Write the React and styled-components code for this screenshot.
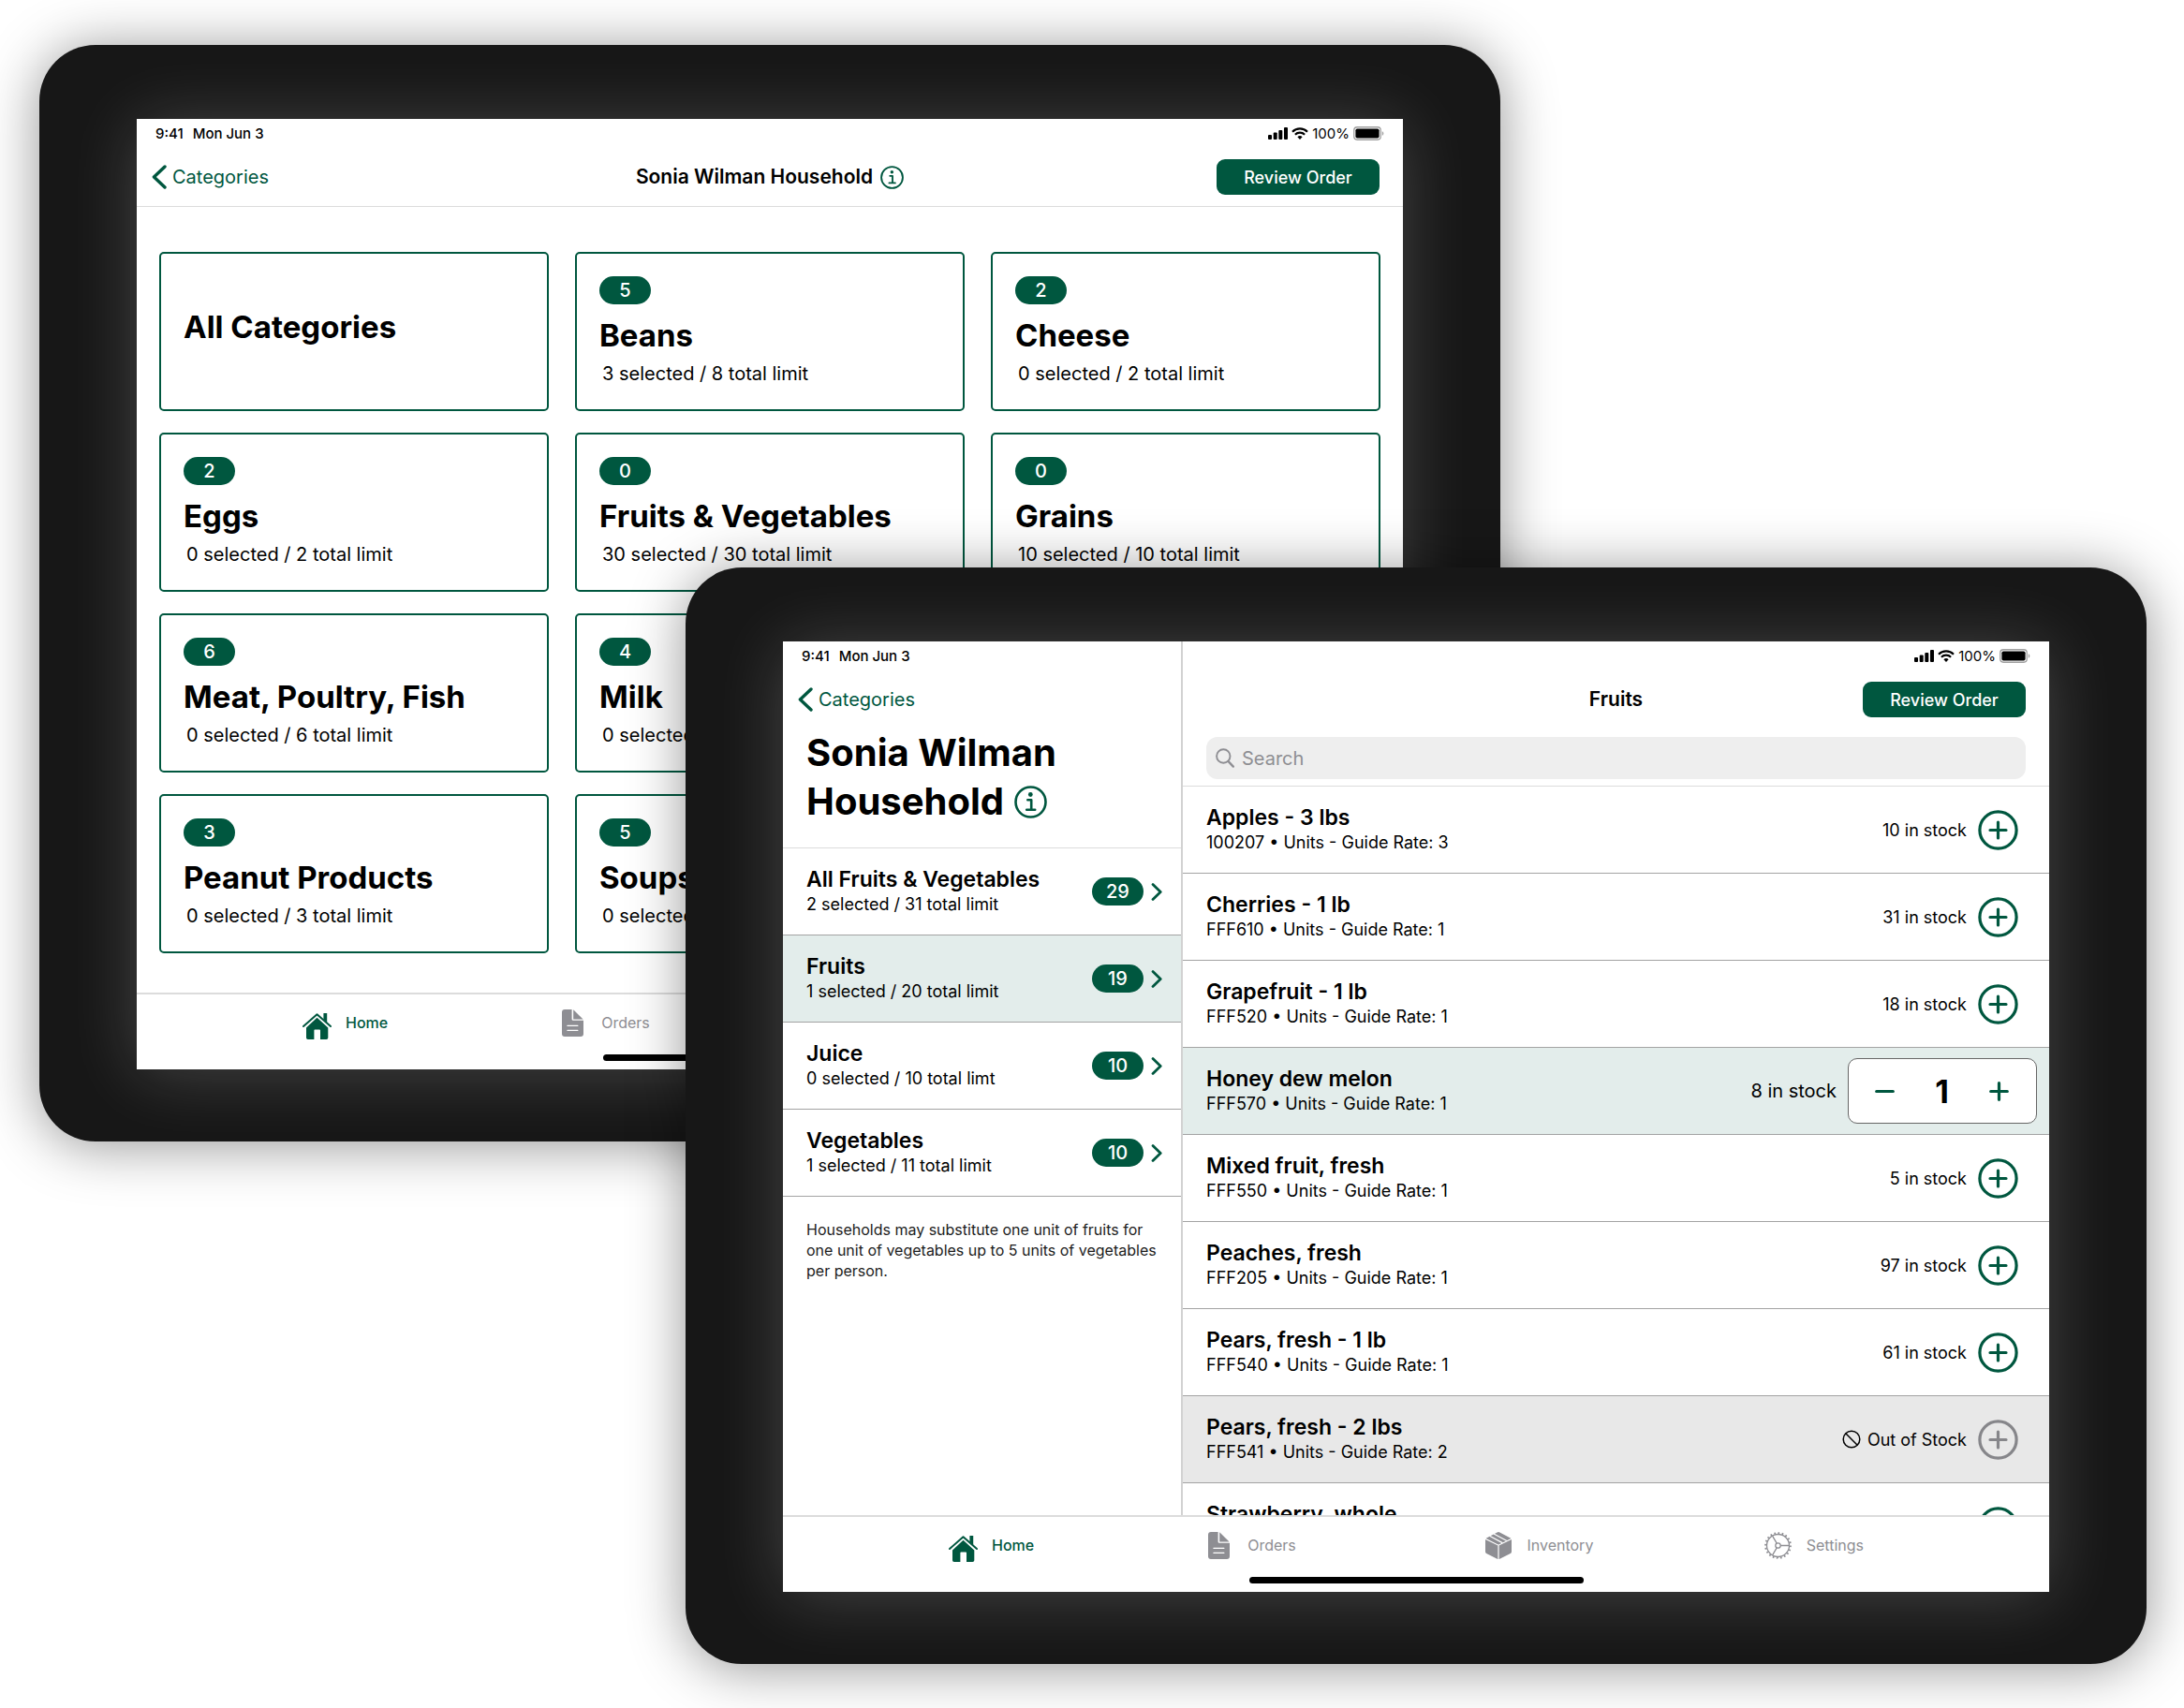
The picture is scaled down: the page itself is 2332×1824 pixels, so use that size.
import React from 'react';
import styled, { createGlobalStyle, css } from 'styled-components';

const green = '#00573f';
const gray = '#8e8e93';

const GlobalStyle = createGlobalStyle`
  *, *::before, *::after { box-sizing: border-box; }
  body {
    margin: 0;
    background: #fff;
    color: #000;
    font-family: Inter, Roboto, "Liberation Sans", sans-serif;
  }
  h1, h2, h3, p, ul { margin: 0; padding: 0; }
  ul { list-style: none; }
  a { color: inherit; text-decoration: none; }
  button { border: 0; padding: 0; background: none; font: inherit; color: inherit; cursor: pointer; }
  svg { display: block; flex: none; }
`;

/* ---------- devices ---------- */

const Stage = styled.main`
  display: grid;
  grid-template-columns: minmax(0, 690fr) minmax(0, 870fr) minmax(0, 690fr);
  align-items: start;
  padding: 48px 40px 47px 42px;
  overflow: hidden;
`;

const Device = styled.section`
  grid-row: 1;
  grid-column: ${p => (p.$front ? '2 / 4' : '1 / 3')};
  margin-top: ${p => (p.$front ? '558px' : '0')};
  padding: 79px 104px 77px;
  border-radius: 60px;
  background: #171717;
  box-shadow: 0 4px 60px rgba(0, 0, 0, 0.42);
`;

const Screen = styled.div`
  display: flex;
  flex-direction: column;
  aspect-ratio: 1352 / 1015;
  background: #fff;
  box-shadow: 0 4px 70px rgba(255, 255, 255, 0.2);
`;

/* ---------- status and navigation bars ---------- */

const StatusBar = styled.div`
  display: flex;
  align-items: center;
  height: 30px;
  padding: 0 20px;
  font-size: 15px;
  font-weight: 500;
`;

const Clock = styled.div`
  display: flex;
  gap: 10px;
`;

const Indicators = styled.div`
  display: flex;
  align-items: center;
  gap: 4px;
  margin-left: auto;
  font-weight: 400;
`;

const NavBar = styled.header`
  display: grid;
  grid-template-columns: 1fr auto 1fr;
  align-items: center;
  padding: 13px 25px ${p => (p.$lined ? '12px' : '8px')};
  border-bottom: ${p => (p.$lined ? '1px solid #dcdcdc' : '0')};
`;

const BackLink = styled.a`
  display: flex;
  align-items: center;
  gap: 6px;
  height: 38px;
  margin-left: -9px;
  color: ${green};
  font-size: 20px;
`;

const NavTitle = styled.h2`
  display: flex;
  align-items: center;
  gap: 8px;
  grid-column: 2;
  font-size: 21px;
  font-weight: 600;
  line-height: 38px;
`;

const ReviewButton = styled.button`
  grid-column: 3;
  justify-self: end;
  width: 174px;
  height: 38px;
  border-radius: 9px;
  background: ${green};
  color: #fff;
  font-size: 18px;
  font-weight: 500;
`;

const InfoButton = styled.button`
  color: ${green};
`;

/* ---------- category cards ---------- */

const Content = styled.div`
  flex: 1;
  min-height: 0;
`;

const CardGrid = styled.ul`
  display: grid;
  grid-template-columns: repeat(3, minmax(0, 1fr));
  grid-auto-rows: 170px;
  gap: 23px 28px;
  padding: 48px 24px 0;
`;

const CardItem = styled.li`
  display: flex;
  ${p => p.$newRow && css`grid-column-start: 1;`}
`;

const Card = styled.a`
  display: flex;
  flex: 1;
  flex-direction: column;
  align-items: flex-start;
  min-width: 0;
  padding: ${p => (p.$plain ? '57px 24px 0' : '24px 24px 0')};
  border: 2px solid ${green};
  border-radius: 5px;
`;

const CardTitle = styled.h3`
  margin-top: ${p => (p.$plain ? '0' : '12px')};
  font-size: 33px;
  font-weight: 700;
  line-height: 42px;
`;

const CardMeta = styled.p`
  padding-left: 3px;
  font-size: 20px;
  line-height: 40px;
`;

const Badge = styled.span`
  display: grid;
  place-items: center;
  width: 55px;
  height: 30px;
  border-radius: 15px;
  background: ${green};
  color: #fff;
  font-size: 20px;
  font-weight: 500;
  line-height: 30px;
`;

/* ---------- tab bar ---------- */

const TabBar = styled.nav`
  display: flex;
  flex-direction: column;
  align-items: center;
  justify-content: space-between;
  height: 82px;
  padding-bottom: 9px;
  border-top: 2px solid #dcdcdc;
`;

const Tabs = styled.ul`
  display: grid;
  grid-template-columns: minmax(0, 277fr) minmax(0, 296fr) minmax(0, 297fr) auto;
  width: 100%;
  padding: 12px 198px 0 177px;
`;

const TabLink = styled.a`
  display: flex;
  align-items: center;
  gap: ${p => p.$gap};
  height: 36px;
  color: ${p => (p.$active ? green : gray)};
  font-size: 16px;
  font-weight: ${p => (p.$active ? 500 : 400)};
`;

const HomeIndicator = styled.div`
  width: 357px;
  height: 7px;
  border-radius: 4px;
  background: #000;
`;

/* ---------- split view ---------- */

const Split = styled.div`
  display: grid;
  grid-template-columns: minmax(0, 427fr) minmax(0, 925fr);
  flex: 1;
  min-height: 0;
  overflow: hidden;
`;

const Sidebar = styled.aside`
  border-right: 2px solid #d2d2d2;
`;

const Household = styled.h1`
  padding: 4px 24px 23px 25px;
  border-bottom: 1px solid #dcdcdc;
  font-size: 40px;
  font-weight: 700;
  line-height: 52px;
`;

const HouseholdLine = styled.span`
  display: flex;
  align-items: center;
  gap: 11px;
`;

const rowBox = css`
  display: flex;
  align-items: center;
  height: 93px;
  border-bottom: 1px solid #a3a3a3;
`;

const GroupLink = styled.a`
  ${rowBox}
  gap: 8px;
  padding: 0 20px 0 25px;
  background: ${p => (p.$active ? '#e3edeb' : 'transparent')};
`;

const RowText = styled.div`
  flex: 1;
  min-width: 0;
  padding-bottom: 2px;
  white-space: nowrap;
`;

const RowTitle = styled.h3`
  font-size: 23px;
  font-weight: 600;
  line-height: 28px;
`;

const RowMeta = styled.p`
  font-size: 18px;
  line-height: 25px;
`;

const Note = styled.p`
  padding: 24px 20px 0 25px;
  color: #1c1c1c;
  font-size: 16px;
  line-height: 22px;
`;

const Products = styled.section`
  min-width: 0;
`;

const SearchArea = styled.div`
  padding: 13px 25px 7px;
  border-bottom: 1px solid #dcdcdc;
`;

const SearchBox = styled.label`
  display: flex;
  align-items: center;
  gap: 8px;
  height: 45px;
  padding: 0 10px;
  border-radius: 12px;
  background: #eee;
  color: ${gray};
`;

const SearchInput = styled.input`
  flex: 1;
  min-width: 0;
  border: 0;
  padding: 0;
  outline: 0;
  background: none;
  color: #000;
  font: 400 20px/30px Inter, Roboto, "Liberation Sans", sans-serif;
  &::placeholder { color: ${gray}; opacity: 1; }
`;

const ProductRow = styled.li`
  ${rowBox}
  gap: 12px;
  padding: 0 ${p => (p.$selected ? '13px' : '33px')} 0 25px;
  background: ${p => (p.$selected ? '#e3edeb' : p.$out ? '#e8e8e8' : 'transparent')};
`;

const Stock = styled.span`
  display: flex;
  align-items: center;
  gap: 7px;
  font-size: ${p => (p.$large ? '20px' : '18px')};
`;

const AddButton = styled.button`
  color: ${green};
  &:disabled { color: #86868a; }
`;

const Stepper = styled.div`
  display: flex;
  align-items: center;
  justify-content: space-between;
  width: 202px;
  height: 70px;
  padding: 0 29px 0 28px;
  border: 1px solid #666;
  border-radius: 10px;
  background: #fff;
  color: ${green};
`;

const Quantity = styled.output`
  color: #000;
  font-size: 34px;
  font-weight: 700;
`;

/* ---------- icons ---------- */

const SignalIcon = () => (
  <svg width="21" height="13" viewBox="0 0 21 13" fill="currentColor" aria-hidden="true">
    <rect x="0" y="8" width="4" height="5" rx="1" />
    <rect x="5.7" y="5.6" width="4" height="7.4" rx="1" />
    <rect x="11.3" y="3" width="4" height="10" rx="1" />
    <rect x="17" y="0" width="4" height="13" rx="1" />
  </svg>
);

const WifiIcon = () => (
  <svg width="18" height="13" viewBox="0 0 18 13" fill="none" stroke="currentColor" strokeWidth="2.2" aria-hidden="true">
    <path d="M1 4.7a11.3 11.3 0 0 1 16 0" />
    <path d="M3.9 7.8a7.2 7.2 0 0 1 10.2 0" />
    <path d="M9 12.9 6.4 10.2a3.7 3.7 0 0 1 5.2 0z" fill="currentColor" stroke="none" />
  </svg>
);

const BatteryIcon = () => (
  <svg width="33" height="15" viewBox="0 0 33 15" aria-hidden="true">
    <rect x="0.75" y="0.75" width="28.5" height="13.5" rx="3.4" fill="none" stroke="#a0a0a0" strokeWidth="1.3" />
    <rect x="2.4" y="2.4" width="25.2" height="10.2" rx="1.8" fill="#000" />
    <path d="M30.8 5.2c2 .6 2 4 0 4.6z" fill="#a0a0a0" />
  </svg>
);

const BackIcon = () => (
  <svg width="16" height="26" viewBox="0 0 16 26" fill="none" stroke="currentColor" strokeWidth="3.4" strokeLinecap="round" strokeLinejoin="round" aria-hidden="true">
    <path d="M14 2 2.4 13 14 24" />
  </svg>
);

const ForwardIcon = () => (
  <svg width="12" height="19" viewBox="0 0 12 19" fill="none" stroke={green} strokeWidth="2.8" strokeLinecap="round" strokeLinejoin="round" aria-hidden="true">
    <path d="m2 1.6 8.2 7.9L2 17.4" />
  </svg>
);

const InfoIcon = ({ size }) => (
  <svg width={size} height={size} viewBox="0 0 35 35" fill="none" stroke="currentColor" strokeWidth="2.6" aria-hidden="true">
    <circle cx="17.5" cy="17.5" r="16" />
    <circle cx="17.3" cy="9.5" r="2.4" fill="currentColor" stroke="none" />
    <path d="M14.3 15.2h3.9v10.6M13.2 25.8h9" strokeLinecap="round" strokeLinejoin="round" />
  </svg>
);

const SearchIcon = () => (
  <svg width="20" height="21" viewBox="0 0 20 21" fill="none" stroke="currentColor" strokeWidth="1.9" strokeLinecap="round" aria-hidden="true">
    <circle cx="8.3" cy="8.5" r="7.2" />
    <path d="m13.5 14 5.3 5.6" strokeWidth="2.4" />
  </svg>
);

const AddIcon = () => (
  <svg width="43" height="43" viewBox="0 0 43 43" fill="none" stroke="currentColor" strokeWidth="3.2" strokeLinecap="round" aria-hidden="true">
    <circle cx="21.5" cy="21.5" r="19.6" />
    <path d="M21.5 13v17M13 21.5h17" />
  </svg>
);

const StepIcon = ({ plus }) => (
  <svg width="21" height="21" viewBox="0 0 21 21" fill="none" stroke="currentColor" strokeWidth="3.2" strokeLinecap="round" aria-hidden="true">
    <path d={plus ? 'M10.5 1.7v17.6M1.7 10.5h17.6' : 'M1.7 10.5h17.6'} />
  </svg>
);

const BlockedIcon = () => (
  <svg width="20" height="20" viewBox="0 0 20 20" fill="none" stroke="#000" strokeWidth="1.5" aria-hidden="true">
    <circle cx="10" cy="10" r="8.8" />
    <path d="m3.8 3.8 12.4 12.4" />
  </svg>
);

const HomeIcon = () => (
  <svg width="31" height="36" viewBox="0 -8 31 36" fill="currentColor" aria-hidden="true">
    <path d="M1 14 15.5 1.2 30 14" fill="none" stroke="currentColor" strokeWidth="2" strokeLinecap="round" strokeLinejoin="round" />
    <path d="M22.4.6q0-.6.6-.6h2.6q.6 0 .6.6v9.400l-3.800-3.600z" />
    <path d="M15.500 4.800 27.300 15.400v10.800q0 1.800-1.800 1.800H19V18.200q0-.8-.8-.8h-5q-.8 0-.8.8v9.800H5.800q-1.800 0-1.800-1.800V15.400z" />
  </svg>
);

const OrdersIcon = () => (
  <svg width="23" height="29" viewBox="0 0 23 29" fill="currentColor" aria-hidden="true">
    <path d="M3 0h7.6v10.4q0 1.4 1.4 1.4h11V26q0 3-3 3H3q-3 0-3-3V3q0-3 3-3z" />
    <path d="m12.200.2 10.400 10.200H12.200z" />
    <path d="M5.900 17.300h11M5.900 22.300h11" stroke="#fff" strokeWidth="1.300" strokeLinecap="round" />
  </svg>
);

const InventoryIcon = () => (
  <svg width="28" height="29" viewBox="0 0 28 29" aria-hidden="true">
    <path d="M12.600.4q1.400-.7 2.800 0L26.800 6.400q1.200.7 1.200 2V21q0 1.400-1.200 2L15.400 28.700q-1.400.6-2.800 0L1.200 23Q0 22.400 0 21V8.400Q0 7.100 1.200 6.400z" fill="currentColor" />
    <path d="M0 7.400 14 14.200 28 7.400M14 14.200V29M4.600 4.300 18.200 11.600M9 2 22.600 9.300" fill="none" stroke="#fff" strokeWidth="1.200" />
  </svg>
);

const SettingsIcon = () => (
  <svg width="29" height="29" viewBox="0 0 29 29" fill="none" stroke="currentColor" strokeWidth="1.300" aria-hidden="true">
    <circle cx="14.500" cy="14.500" r="12" />
    <circle cx="14.500" cy="14.500" r="13.400" strokeWidth="1.900" pathLength="80" strokeDasharray="1.600 2.400" />
    <circle cx="14.500" cy="14.500" r="2.700" />
    <path d="M17.200 14.500h9.300M13.200 12.100 8.500 4.100M13.200 16.900 8.500 24.900" />
  </svg>
);

/* ---------- shared pieces ---------- */

const Time = () => (
  <Clock><span>9:41</span><span>Mon Jun 3</span></Clock>
);

const DeviceStatus = () => (
  <Indicators>
    <SignalIcon /><WifiIcon /><span>100%</span><BatteryIcon />
  </Indicators>
);

const Back = () => (
  <BackLink href="#categories"><BackIcon />Categories</BackLink>
);

const tabs = [
  { name: 'Home', Icon: HomeIcon, gap: '15px', active: true },
  { name: 'Orders', Icon: OrdersIcon, gap: '19px' },
  { name: 'Inventory', Icon: InventoryIcon, gap: '16px' },
  { name: 'Settings', Icon: SettingsIcon, gap: '16px' },
];

const BottomTabs = () => (
  <TabBar aria-label="Main">
    <Tabs>
      {tabs.map(({ name, Icon, gap, active }) => (
        <li key={name}>
          <TabLink href={`#${name.toLowerCase()}`} $active={active} $gap={gap}><Icon />{name}</TabLink>
        </li>
      ))}
    </Tabs>
    <HomeIndicator />
  </TabBar>
);

/* ---------- data ---------- */

const categories = [
  { name: 'All Categories' },
  { name: 'Beans', left: 5, meta: '3 selected / 8 total limit' },
  { name: 'Cheese', left: 2, meta: '0 selected / 2 total limit' },
  { name: 'Eggs', left: 2, meta: '0 selected / 2 total limit' },
  { name: 'Fruits & Vegetables', left: 0, meta: '30 selected / 30 total limit' },
  { name: 'Grains', left: 0, meta: '10 selected / 10 total limit' },
  { name: 'Meat, Poultry, Fish', left: 6, meta: '0 selected / 6 total limit' },
  { name: 'Milk', left: 4, meta: '0 selected' },
  { name: 'Peanut Products', left: 3, meta: '0 selected / 3 total limit', newRow: true },
  { name: 'Soups', left: 5, meta: '0 selected' },
];

const groups = [
  { name: 'All Fruits & Vegetables', left: 29, meta: '2 selected / 31 total limit' },
  { name: 'Fruits', left: 19, meta: '1 selected / 20 total limit', active: true },
  { name: 'Juice', left: 10, meta: '0 selected / 10 total limt' },
  { name: 'Vegetables', left: 10, meta: '1 selected / 11 total limit' },
];

const products = [
  { name: 'Apples - 3 lbs', meta: '100207 • Units - Guide Rate: 3', stock: 10 },
  { name: 'Cherries - 1 lb', meta: 'FFF610 • Units - Guide Rate: 1', stock: 31 },
  { name: 'Grapefruit - 1 lb', meta: 'FFF520 • Units - Guide Rate: 1', stock: 18 },
  { name: 'Honey dew melon', meta: 'FFF570 • Units - Guide Rate: 1', stock: 8, quantity: 1 },
  { name: 'Mixed fruit, fresh', meta: 'FFF550 • Units - Guide Rate: 1', stock: 5 },
  { name: 'Peaches, fresh', meta: 'FFF205 • Units - Guide Rate: 1', stock: 97 },
  { name: 'Pears, fresh - 1 lb', meta: 'FFF540 • Units - Guide Rate: 1', stock: 61 },
  { name: 'Pears, fresh - 2 lbs', meta: 'FFF541 • Units - Guide Rate: 2', stock: 0 },
  { name: 'Strawberry, whole' },
];

/* ---------- screens ---------- */

const CategoriesScreen = () => (
  <Screen>
    <StatusBar><Time /><DeviceStatus /></StatusBar>
    <NavBar $lined>
      <Back />
      <NavTitle>
        Sonia Wilman Household
        <InfoButton aria-label="Household details"><InfoIcon size={25} /></InfoButton>
      </NavTitle>
      <ReviewButton>Review Order</ReviewButton>
    </NavBar>
    <Content>
      <CardGrid>
        {categories.map(c => {
          const plain = c.left === undefined;
          return (
            <CardItem key={c.name} $newRow={c.newRow}>
              <Card href="#category" $plain={plain}>
                {!plain && <Badge>{c.left}</Badge>}
                <CardTitle $plain={plain}>{c.name}</CardTitle>
                {c.meta && <CardMeta>{c.meta}</CardMeta>}
              </Card>
            </CardItem>
          );
        })}
      </CardGrid>
    </Content>
    <BottomTabs />
  </Screen>
);

const Product = ({ name, meta, stock, quantity }) => {
  const out = stock === 0;
  return (
    <ProductRow $selected={Boolean(quantity)} $out={out}>
      <RowText>
        <RowTitle>{name}</RowTitle>
        <RowMeta>{meta || '\u00a0'}</RowMeta>
      </RowText>
      {out && <Stock><BlockedIcon />Out of Stock</Stock>}
      {stock > 0 && <Stock $large={Boolean(quantity)}>{stock} in stock</Stock>}
      {quantity ? (
        <Stepper>
          <button aria-label="Remove one"><StepIcon /></button>
          <Quantity>{quantity}</Quantity>
          <button aria-label="Add one"><StepIcon plus /></button>
        </Stepper>
      ) : (
        <AddButton disabled={out} aria-label={`Add ${name}`}><AddIcon /></AddButton>
      )}
    </ProductRow>
  );
};

const ProductsScreen = () => (
  <Screen>
    <Split>
      <Sidebar>
        <StatusBar><Time /></StatusBar>
        <NavBar><Back /></NavBar>
        <Household>
          <HouseholdLine>Sonia Wilman</HouseholdLine>
          <HouseholdLine>
            Household
            <InfoButton aria-label="Household details"><InfoIcon size={35} /></InfoButton>
          </HouseholdLine>
        </Household>
        <ul>
          {groups.map(g => (
            <li key={g.name}>
              <GroupLink href="#group" $active={g.active}>
                <RowText>
                  <RowTitle>{g.name}</RowTitle>
                  <RowMeta>{g.meta}</RowMeta>
                </RowText>
                <Badge>{g.left}</Badge>
                <ForwardIcon />
              </GroupLink>
            </li>
          ))}
        </ul>
        <Note>
          Households may substitute one unit of fruits for one unit of vegetables up to 5 units of vegetables per person.
        </Note>
      </Sidebar>
      <Products>
        <StatusBar><DeviceStatus /></StatusBar>
        <NavBar>
          <NavTitle>Fruits</NavTitle>
          <ReviewButton>Review Order</ReviewButton>
        </NavBar>
        <SearchArea>
          <SearchBox>
            <SearchIcon />
            <SearchInput type="search" placeholder="Search" aria-label="Search" />
          </SearchBox>
        </SearchArea>
        <ul>
          {products.map(p => <Product key={p.name} {...p} />)}
        </ul>
      </Products>
    </Split>
    <BottomTabs />
  </Screen>
);

export default function App() {
  return (
    <>
      <GlobalStyle />
      <Stage>
        <Device><CategoriesScreen /></Device>
        <Device $front><ProductsScreen /></Device>
      </Stage>
    </>
  );
}
